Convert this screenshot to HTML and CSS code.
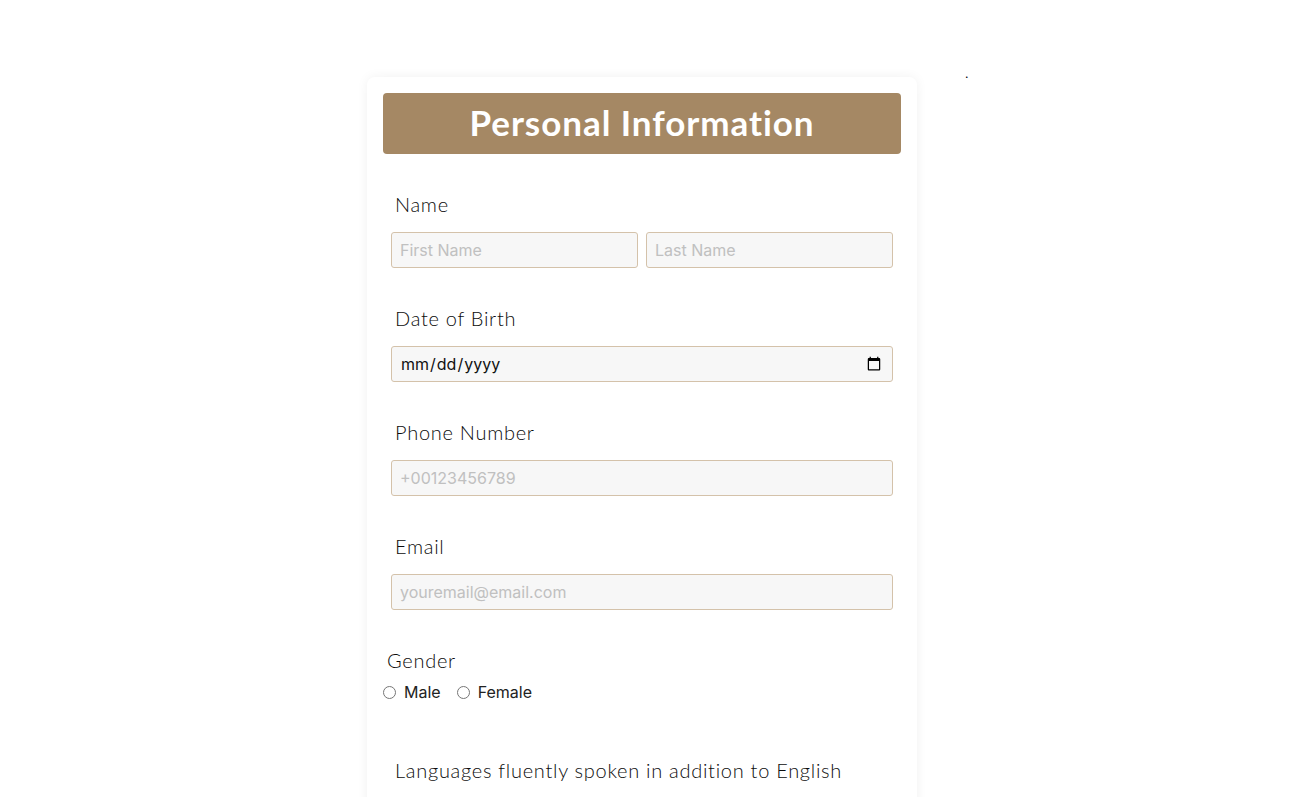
FILE: index.html
```html
<!DOCTYPE html>
<html lang="en">
<head>
<meta charset="utf-8">
<title>Personal Information</title>
<link rel="stylesheet" href="styles.css">
</head>
<body>
<div class="page">
  <form class="card">
    <h1 class="card-title">Personal Information</h1>
    <div class="fields">
      <div class="group">
        <label class="label">Name</label>
        <div class="row">
          <input class="input" type="text" placeholder="First Name">
          <input class="input" type="text" placeholder="Last Name">
        </div>
      </div>
      <div class="group">
        <label class="label">Date of Birth</label>
        <input class="input" type="date">
      </div>
      <div class="group">
        <label class="label">Phone Number</label>
        <input class="input" type="tel" placeholder="+00123456789">
      </div>
      <div class="group">
        <label class="label">Email</label>
        <input class="input" type="email" placeholder="youremail@email.com">
      </div>
    </div>
    <div class="gender">
      <div class="gender-label">Gender</div>
      <div class="radios">
        <label class="radio"><input type="radio" name="g"> Male</label>
        <label class="radio"><input type="radio" name="g"> Female</label>
      </div>
    </div>
    <div class="languages">
      <label class="label">Languages fluently spoken in addition to English</label>
    </div>
  </form>
  <span class="dot">.</span>
</div>
</body>
</html>
```

FILE: styles.css
```css
html, body {
  margin: 0;
  padding: 0;
  background: #ffffff;
  overflow: hidden;
}
.page {
  display: flex;
  align-items: flex-start;
  padding: 77px 0 0 367px;
  height: 720px;
}
.card {
  width: 550px;
  box-sizing: border-box;
  padding: 16px 16px 40px;
  background: #fff;
  border-radius: 8px;
  box-shadow: 0 0 12px rgba(0,0,0,0.06);
  min-height: 760px;
}
.card-title {
  margin: 0;
  height: 61px;
  line-height: 58px;
  background: #a58864;
  border-radius: 4px;
  color: #fff;
  text-align: center;
  font-family: "Lato", sans-serif;
  font-weight: 700;
  font-size: 35px;
  letter-spacing: 0.95px;
}
.fields {
  display: flex;
  flex-direction: column;
  gap: 38px;
  padding: 38px 8px 0;
}
.group {
  display: flex;
  flex-direction: column;
  gap: 16px;
}
.label, .gender-label {
  display: block;
  font-family: "Lato", sans-serif;
  font-weight: 300;
  font-size: 20px;
  line-height: 24px;
  color: #0c0c0c;
  padding-left: 4px;
  letter-spacing: 0.72px;
}
.row {
  display: flex;
  gap: 8px;
}
.input {
  box-sizing: border-box;
  width: 100%;
  height: 36px;
  margin: 0;
  padding: 0 8px;
  border: 1px solid #d4c2aa;
  border-radius: 3px;
  background: #f7f7f7;
  font-family: "Inter", sans-serif;
  font-size: 16px;
  color: #111;
}
.row .input {
  flex: 1;
  min-width: 0;
}
.input::placeholder {
  color: #c0c0c0;
}
.gender {
  padding: 38px 0 0 0;
}
.gender-label {
  padding-left: 4px;
}
.radios {
  display: flex;
  gap: 16px;
  margin-top: 10px;
}
.radio {
  display: flex;
  align-items: center;
  gap: 8px;
  font-family: "Inter", sans-serif;
  font-size: 16px;
  color: #222;
}
.radio input {
  margin: 0;
  width: 13px;
  height: 13px;
}
.languages {
  padding: 56px 8px 0;
}
.dot {
  margin: -10px 0 0 48px;
  font-family: "Inter", sans-serif;
  font-size: 12px;
  line-height: 14px;
  color: #000;
}
```
